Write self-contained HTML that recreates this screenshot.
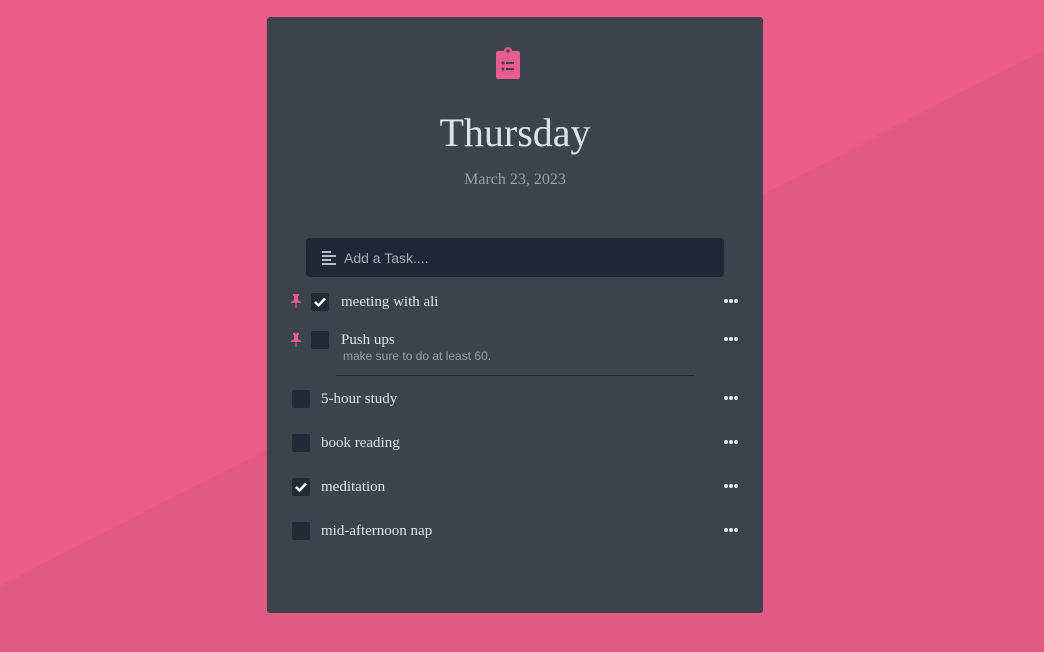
<!DOCTYPE html>
<html><head><style>
body{margin:0;width:1044px;height:652px;overflow:hidden;background:#ec5d8b;position:relative;font-family:"Liberation Serif",serif}
.bg2{position:absolute;left:0;top:0;width:1044px;height:652px}
.card{position:absolute;left:267px;top:17px;width:496px;height:596px;background:#3d434b;border-radius:3px}
.t{position:absolute;color:#dbe3ea}
.cb{position:absolute;width:18px;height:18px;background:#222a37;border-radius:2px}
.dots{position:absolute;left:457px;width:15px;height:4px}
.dots i{position:absolute;top:0;width:4px;height:4px;border-radius:50%;background:#e8ecf0}
.pin{position:absolute;left:23px}
</style></head><body>
<svg class="bg2" viewBox="0 0 1044 652"><polygon points="1044,50 1044,652 0,652 0,586" fill="#e15a86"/></svg>
<div class="card">
<svg style="position:absolute;left:228px;top:29px" width="26" height="34" viewBox="0 0 26 34"><path d="M3 5h6a4 4 0 0 1 8 0h6a2 2 0 0 1 2 2v24a2 2 0 0 1-2 2H3a2 2 0 0 1-2-2V7a2 2 0 0 1 2-2z" fill="#e85d8d"/><circle cx="13" cy="5" r="1.6" fill="#3d434b"/><circle cx="8" cy="17" r="1.5" fill="#3d434b"/><circle cx="8" cy="23" r="1.5" fill="#3d434b"/><rect x="11" y="16" width="8" height="2" fill="#3d434b"/><rect x="11" y="22" width="8" height="2" fill="#3d434b"/></svg>
<div class="t" style="left:0;width:496px;text-align:center;top:92px;font-size:40px">Thursday</div>
<div class="t" style="left:0;width:496px;text-align:center;top:154px;font-size:16px;color:#9aa0a6">March 23, 2023</div>
<div style="position:absolute;left:39px;top:221px;width:418px;height:39px;background:#1f2836;border-radius:4px">
<svg style="position:absolute;left:16px;top:13px" width="15" height="14"><g fill="#b7bec7"><rect x="0" y="0" width="9" height="2"/><rect x="0" y="4" width="14" height="2"/><rect x="0" y="8" width="9" height="2"/><rect x="0" y="12" width="14" height="2"/></g></svg>
<div style="position:absolute;left:38px;top:12px;font-family:'Liberation Sans',sans-serif;font-size:14px;color:#a4abb4">Add a Task....</div></div>

<svg class="pin" style="top:277px" width="12" height="14" viewBox="0 0 12 14"><path d="M3 0h6v2H8v4l3 2v1H1V8l3-2V2H3z M5.5 9h1v5h-1z" fill="#e85d8d"/></svg>
<div class="cb" style="left:44px;top:276px"><svg width="18" height="18"><path d="M4 9l3.5 3.5L14 5.5" stroke="#fff" stroke-width="2.5" fill="none"/></svg></div>
<div class="t" style="left:74px;top:277px;font-size:15px">meeting with ali</div>
<div class="dots" style="top:282px"><i style="left:0"></i><i style="left:5px"></i><i style="left:10px"></i></div>

<svg class="pin" style="top:316px" width="12" height="14" viewBox="0 0 12 14"><path d="M3 0h6v2H8v4l3 2v1H1V8l3-2V2H3z M5.5 9h1v5h-1z" fill="#e85d8d"/></svg>
<div class="cb" style="left:44px;top:314px"></div>
<div class="t" style="left:74px;top:315px;font-size:15px">Push ups</div>
<div class="t" style="left:76px;top:332px;font-size:12px;color:#9aa0a6;font-family:'Liberation Sans',sans-serif">make sure to do at least 60.</div>
<div class="dots" style="top:320px"><i style="left:0"></i><i style="left:5px"></i><i style="left:10px"></i></div>
<div style="position:absolute;left:69px;top:358px;width:358px;height:1px;background:#222831"></div>

<div class="cb" style="left:25px;top:373px"></div>
<div class="t" style="left:54px;top:374px;font-size:15px">5-hour study</div>
<div class="dots" style="top:379px"><i style="left:0"></i><i style="left:5px"></i><i style="left:10px"></i></div>
<div class="cb" style="left:25px;top:417px"></div>
<div class="t" style="left:54px;top:418px;font-size:15px">book reading</div>
<div class="dots" style="top:423px"><i style="left:0"></i><i style="left:5px"></i><i style="left:10px"></i></div>
<div class="cb" style="left:25px;top:461px"><svg width="18" height="18"><path d="M4 9l3.5 3.5L14 5.5" stroke="#fff" stroke-width="2.5" fill="none"/></svg></div>
<div class="t" style="left:54px;top:462px;font-size:15px">meditation</div>
<div class="dots" style="top:467px"><i style="left:0"></i><i style="left:5px"></i><i style="left:10px"></i></div>
<div class="cb" style="left:25px;top:505px"></div>
<div class="t" style="left:54px;top:506px;font-size:15px">mid-afternoon nap</div>
<div class="dots" style="top:511px"><i style="left:0"></i><i style="left:5px"></i><i style="left:10px"></i></div>
</div>
</body></html>
